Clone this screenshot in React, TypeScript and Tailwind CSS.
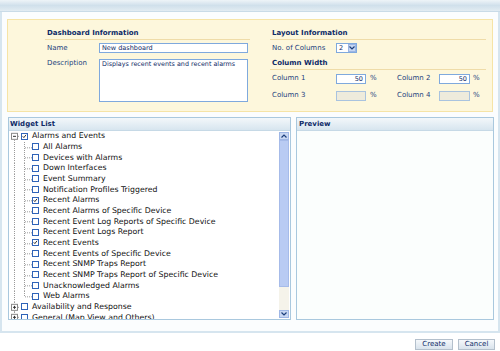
import React from "react";

const children: { label: string; checked?: boolean }[] = [
  { label: "All Alarms" },
  { label: "Devices with Alarms" },
  { label: "Down Interfaces" },
  { label: "Event Summary" },
  { label: "Notification Profiles Triggered" },
  { label: "Recent Alarms", checked: true },
  { label: "Recent Alarms of Specific Device" },
  { label: "Recent Event Log Reports of Specific Device" },
  { label: "Recent Event Logs Report" },
  { label: "Recent Events", checked: true },
  { label: "Recent Events of Specific Device" },
  { label: "Recent SNMP Traps Report" },
  { label: "Recent SNMP Traps Report of Specific Device" },
  { label: "Unacknowledged Alarms" },
  { label: "Web Alarms" },
];

const RH = 10.67;

function Check({ checked }: { checked?: boolean }) {
  return (
    <span className="w-[7px] h-[7px] border border-[#2f63b8] bg-white shrink-0 flex items-center justify-center">
      {checked && (
        <svg width="7" height="7" viewBox="0 0 7 7" className="block">
          <path d="M1 3.2 L2.6 5 L5.6 1.2" stroke="#111" strokeWidth="1.2" fill="none" />
        </svg>
      )}
    </span>
  );
}

function TopLines({ sign, up, down }: { sign: "-" | "+"; up: boolean; down: boolean }) {
  const m = RH / 2;
  return (
    <svg width="11" height={RH} className="block shrink-0">
      {up && <line x1="4.5" y1="0" x2="4.5" y2={m - 3} stroke="#9a9a9a" strokeDasharray="1 1" />}
      {down && <line x1="4.5" y1={m + 3.5} x2="4.5" y2={RH} stroke="#9a9a9a" strokeDasharray="1 1" />}
      <line x1="8" y1={m} x2="10" y2={m} stroke="#9a9a9a" strokeDasharray="1 1" />
      <rect x="1.5" y={m - 3} width="6" height="6" fill="#fff" stroke="#8a8a8a" />
      <line x1="3" y1={m} x2="6" y2={m} stroke="#333" />
      {sign === "+" && <line x1="4.5" y1={m - 1.5} x2="4.5" y2={m + 1.5} stroke="#333" />}
    </svg>
  );
}

function ChildLines({ last }: { last: boolean }) {
  const m = RH / 2;
  return (
    <svg width="22" height={RH} className="block shrink-0">
      <line x1="4.5" y1="0" x2="4.5" y2={RH} stroke="#9a9a9a" strokeDasharray="1 1" />
      <line x1="14.5" y1="0" x2="14.5" y2={last ? m : RH} stroke="#9a9a9a" strokeDasharray="1 1" />
      <line x1="15" y1={m + 0.5} x2="22" y2={m + 0.5} stroke="#9a9a9a" strokeDasharray="1 1" />
    </svg>
  );
}

function TextInput({ value, w, disabled, right }: { value?: string; w: string; disabled?: boolean; right?: boolean }) {
  return (
    <div
      className={`${w} h-[10px] border ${disabled ? "border-[#a9c3df] bg-[#eeebdc]" : "border-[#7fa9dd] bg-white"} text-[6.5px] leading-[8px] text-[#0f2a66] px-[2px] whitespace-nowrap ${right ? "text-right" : ""}`}
    >
      {value}
    </div>
  );
}

export default function App() {
  return (
    <div className="w-[500px] h-[351px] bg-white overflow-hidden font-['DejaVu_Sans',Verdana,sans-serif] flex flex-col">
      {/* top bar */}
      <div className="h-[12px] shrink-0 bg-gradient-to-b from-[#eef4f8] via-[#d0e0eb] to-[#e2ecf2] border-b border-[#c9dbe7]" />
      {/* main container */}
      <div className="h-[321px] shrink-0 border-x-2 border-b-2 border-[#d6e5ef] bg-[#fbfdfe] pl-[5px] pr-[3px] pt-[7px] flex flex-col">
        {/* yellow panel */}
        <div className="h-[93px] w-[486px] border border-[#f6e4a6] bg-[#fdf7dc] flex pt-[8px]">
          {/* left: dashboard info */}
          <div className="ml-[37px] w-[205px] flex flex-col">
            <div className="h-[12px] border-b border-[#efdca8] text-[7px] font-bold text-[#0e2b68] pl-[2px] leading-[11px]">
              Dashboard Information
            </div>
            <div className="flex items-center mt-[2px] h-[12px]">
              <span className="w-[54px] pl-[2px] text-[7px] text-[#1c3f7c]">Name</span>
              <TextInput w="w-[149px]" value="New dashboard" />
            </div>
            <div className="flex mt-[5px]">
              <span className="w-[54px] pl-[2px] text-[7px] text-[#1c3f7c] leading-[9px]">Description</span>
              <div className="w-[149px] h-[43px] border border-[#7fa9dd] bg-white text-[6.4px] leading-[9px] text-[#0f2a66] px-[2px] whitespace-nowrap">
                Displays recent events and recent alarms
              </div>
            </div>
          </div>
          {/* right: layout info */}
          <div className="ml-[20px] w-[216px] flex flex-col">
            <div className="h-[12px] border-b border-[#efdca8] text-[7px] font-bold text-[#0e2b68] pl-[2px] leading-[11px]">
              Layout Information
            </div>
            <div className="flex items-center mt-[2px] h-[12px]">
              <span className="w-[66px] pl-[2px] text-[7px] text-[#1c3f7c]">No. of Columns</span>
              <div className="w-[21px] h-[10px] border border-[#7fa9dd] bg-white flex items-center">
                <span className="text-[6.5px] text-[#0f2a66] pl-[2px] leading-[8px] flex-1">2</span>
                <span className="w-[8px] h-[8px] bg-[#c5d6f2] border border-[#9bb5e4] flex items-center justify-center">
                  <svg width="6" height="4" viewBox="0 0 6 4"><path d="M0.5 0.5 L3 3 L5.5 0.5" stroke="#1c3f7c" strokeWidth="1.2" fill="none" /></svg>
                </span>
              </div>
            </div>
            <div className="h-[14px] mt-[2px] border-b border-[#efdca8] text-[7px] font-bold text-[#0e2b68] pl-[2px] leading-[14px]">
              Column Width
            </div>
            <div className="flex items-center mt-[3px] h-[11px]">
              <span className="w-[66px] pl-[2px] text-[7px] text-[#1c3f7c]">Column 1</span>
              <TextInput w="w-[30px]" value="50" right />
              <span className="ml-[4px] w-[27px] text-[7px] text-[#1c3f7c]">%</span>
              <span className="w-[42px] text-[7px] text-[#1c3f7c]">Column 2</span>
              <TextInput w="w-[31px]" value="50" right />
              <span className="ml-[3px] text-[7px] text-[#1c3f7c]">%</span>
            </div>
            <div className="flex items-center mt-[6px] h-[11px]">
              <span className="w-[66px] pl-[2px] text-[7px] text-[#1c3f7c]">Column 3</span>
              <TextInput w="w-[30px]" disabled />
              <span className="ml-[4px] w-[27px] text-[7px] text-[#1c3f7c]">%</span>
              <span className="w-[42px] text-[7px] text-[#1c3f7c]">Column 4</span>
              <TextInput w="w-[31px]" disabled />
              <span className="ml-[3px] text-[7px] text-[#1c3f7c]">%</span>
            </div>
          </div>
        </div>

        {/* panels */}
        <div className="flex mt-[5px] h-[203px] gap-[5px]">
          {/* widget list */}
          <div className="ml-[1px] w-[283px] h-full border border-[#a9c8de] bg-white flex flex-col">
            <div className="h-[13px] shrink-0 bg-gradient-to-b from-[#f3f7fa] to-[#d7e5ef] border-b border-[#c6d9e6] text-[7px] font-bold text-[#0e2b68] pl-[1px] leading-[13px]">
              Widget List
            </div>
            <div className="flex flex-1 min-h-0">
              <div className="flex-1 overflow-hidden pl-[1px]">
                <div className="flex items-center" style={{ height: RH }}>
                  <TopLines sign="-" up={false} down={true} />
                  <Check checked />
                  <span className="ml-[4px] text-[7.8px] text-[#111] whitespace-nowrap">Alarms and Events</span>
                </div>
                {children.map((c, i) => (
                  <div key={c.label} className="flex items-center" style={{ height: RH }}>
                    <ChildLines last={i === children.length - 1} />
                    <Check checked={c.checked} />
                    <span className="ml-[4px] text-[7.8px] text-[#111] whitespace-nowrap">{c.label}</span>
                  </div>
                ))}
                <div className="flex items-center" style={{ height: RH }}>
                  <TopLines sign="+" up={true} down={true} />
                  <Check />
                  <span className="ml-[4px] text-[7.8px] text-[#111] whitespace-nowrap">Availability and Response</span>
                </div>
                <div className="flex items-center" style={{ height: RH }}>
                  <TopLines sign="+" up={true} down={false} />
                  <Check />
                  <span className="ml-[4px] text-[7.8px] text-[#111] whitespace-nowrap">General (Map View and Others)</span>
                </div>
              </div>
              {/* scrollbar */}
              <div className="w-[10px] shrink-0 flex flex-col mr-[1px] my-[1px]">
                <div className="h-[8px] bg-[#c8d7f3] border border-[#9fb7e6] flex items-center justify-center">
                  <svg width="6" height="4" viewBox="0 0 6 4"><path d="M0.5 3.5 L3 1 L5.5 3.5" stroke="#1c3f7c" strokeWidth="1.2" fill="none" /></svg>
                </div>
                <div className="h-[147px] bg-[#b9cbf3] border border-[#a6bbe9]" />
                <div className="flex-1 bg-[#f5f3ea]" />
                <div className="h-[8px] bg-[#c8d7f3] border border-[#9fb7e6] flex items-center justify-center">
                  <svg width="6" height="4" viewBox="0 0 6 4"><path d="M0.5 0.5 L3 3 L5.5 0.5" stroke="#1c3f7c" strokeWidth="1.2" fill="none" /></svg>
                </div>
              </div>
            </div>
          </div>
          {/* preview */}
          <div className="w-[198px] h-full border border-[#a9c8de] bg-[#fbfefd] flex flex-col">
            <div className="h-[13px] shrink-0 bg-gradient-to-b from-[#f3f7fa] to-[#d7e5ef] border-b border-[#c6d9e6] text-[7px] font-bold text-[#0e2b68] pl-[2px] leading-[13px]">
              Preview
            </div>
          </div>
        </div>
      </div>
      {/* buttons */}
      <div className="flex justify-end gap-[5px] pr-[5px] pt-[6px]">
        <div className="w-[38px] h-[11px] border border-[#b4c0cc] bg-gradient-to-b from-[#f5f8fb] to-[#d9e3ec] text-[7px] leading-[9px] text-center text-[#0e2b68]">
          Create
        </div>
        <div className="w-[37px] h-[11px] border border-[#b4c0cc] bg-gradient-to-b from-[#f5f8fb] to-[#d9e3ec] text-[7px] leading-[9px] text-center text-[#0e2b68]">
          Cancel
        </div>
      </div>
    </div>
  );
}
